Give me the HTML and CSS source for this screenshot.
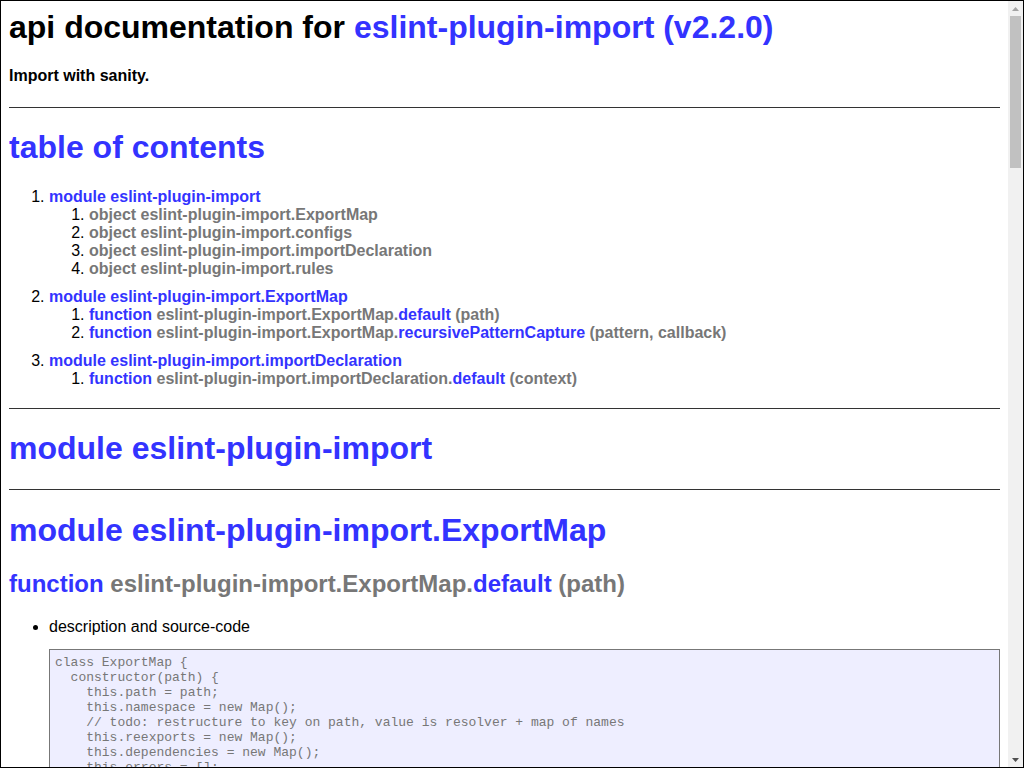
FILE: index.html
```
<!DOCTYPE html>
<html lang="en">
<head>
<meta charset="utf-8">
<title>api documentation for eslint-plugin-import (v2.2.0)</title>
<link rel="stylesheet" href="styles.css">
</head>
<body>
<div class="viewport">
<div class="content">
<div class="page">
<h1 class="title">api documentation for <a href="#">eslint-plugin-import (v2.2.0)</a></h1>
<h4 class="tagline">Import with sanity.</h4>

<div class="section">
<h1 class="section-title"><a href="#">table of contents</a></h1>
<ol class="toc">
  <li class="module-li"><a href="#">module eslint-plugin-import</a>
    <ol>
      <li><span class="sig">object eslint-plugin-import.ExportMap</span></li>
      <li><span class="sig">object eslint-plugin-import.configs</span></li>
      <li><span class="sig">object eslint-plugin-import.importDeclaration</span></li>
      <li><span class="sig">object eslint-plugin-import.rules</span></li>
    </ol>
  </li>
  <li class="module-li"><a href="#">module eslint-plugin-import.ExportMap</a>
    <ol>
      <li><a href="#">function</a> <span class="sig">eslint-plugin-import.ExportMap.</span><a href="#">default</a> <span class="sig">(path)</span></li>
      <li><a href="#">function</a> <span class="sig">eslint-plugin-import.ExportMap.</span><a href="#">recursivePatternCapture</a> <span class="sig">(pattern, callback)</span></li>
    </ol>
  </li>
  <li class="module-li"><a href="#">module eslint-plugin-import.importDeclaration</a>
    <ol>
      <li><a href="#">function</a> <span class="sig">eslint-plugin-import.importDeclaration.</span><a href="#">default</a> <span class="sig">(context)</span></li>
    </ol>
  </li>
</ol>
</div>

<div class="section">
<h1 class="section-title section-title-module"><a href="#">module eslint-plugin-import</a></h1>
</div>

<div class="section">
<h1 class="section-title"><a href="#">module eslint-plugin-import.ExportMap</a></h1>
<h2 class="element-title"><a href="#">function</a> <span class="sig">eslint-plugin-import.ExportMap.</span><a href="#">default</a> <span class="sig">(path)</span></h2>
<ul class="element-list">
<li>description and source-code<pre class="code">class ExportMap {
  constructor(path) {
    this.path = path;
    this.namespace = new Map();
    // todo: restructure to key on path, value is resolver + map of names
    this.reexports = new Map();
    this.dependencies = new Map();
    this.errors = [];
  }

  get hasDefault() {
    return this.get('default') != null;
  } // stronger than this.has

  get size() {
    let size = this.namespace.size + this.reexports.size;
    this.dependencies.forEach(dep =&gt; size += dep().size);
    return size;
  }
...</pre></li>
<li>example usage<pre class="code">n/a</pre></li>
</ul>

<h2 class="element-title"><a href="#">function</a> <span class="sig">eslint-plugin-import.ExportMap.</span><a href="#">recursivePatternCapture</a> <span class="sig">(pattern, callback)</span></h2>
<ul class="element-list">
<li>description and source-code<pre class="code">function recursivePatternCapture(pattern, callback) {
  switch (pattern.type) {
    case 'Identifier':
      // base case
      callback(pattern);
      break;

    case 'ObjectPattern':
      pattern.properties.forEach(({ value }) =&gt; {
        recursivePatternCapture(value, callback);
      });
      break;

    case 'ArrayPattern':
      pattern.elements.forEach(element =&gt; {
        if (element == null) return;
        recursivePatternCapture(element, callback);
      });
      break;
  }
}</pre></li>
<li>example usage<pre class="code">n/a</pre></li>
</ul>
</div>

<div class="section">
<h1 class="section-title"><a href="#">module eslint-plugin-import.importDeclaration</a></h1>
<h2 class="element-title"><a href="#">function</a> <span class="sig">eslint-plugin-import.importDeclaration.</span><a href="#">default</a> <span class="sig">(context)</span></h2>
<ul class="element-list">
<li>description and source-code<pre class="code">function importDeclaration(context) {
  var ancestors = context.getAncestors();
  return ancestors[ancestors.length - 1];
}</pre></li>
<li>example usage<pre class="code">n/a</pre></li>
</ul>
</div>

<div class="footer">[ this document was created with <a href="#">utility2</a> ]</div>
</div>
</div>
<div class="scrollbar" aria-hidden="true">
  <div class="sb-btn"><svg width="7" height="4" viewBox="0 0 7 4"><polygon points="0,4 7,4 3.5,0" fill="#a3a3a3"/></svg></div>
  <div class="sb-track"><div class="sb-thumb"></div></div>
  <div class="sb-btn"><svg width="7" height="4" viewBox="0 0 7 4"><polygon points="0,0 7,0 3.5,4" fill="#505050"/></svg></div>
</div>
</div>
</body>
</html>
```

FILE: styles.css
```
html,
body {
  margin: 0;
  height: 100%;
  overflow: hidden;
}

body {
  font-family: "Liberation Sans", Arial, Helvetica, sans-serif;
  font-size: 16px;
  color: #000;
  background: #fff;
}

.viewport {
  display: flex;
  height: 100%;
  box-sizing: border-box;
  border: 1px solid #000;
}

.content {
  flex: 1;
  min-width: 0;
  overflow: hidden;
}

.page {
  padding: 8px 8px 8px;
}

.scrollbar {
  width: 15px;
  flex: none;
  display: flex;
  flex-direction: column;
  background: #f1f1f1;
}

.sb-btn {
  height: 15px;
  flex: none;
  display: flex;
  align-items: center;
  justify-content: center;
}

.sb-track {
  flex: 1;
  padding: 0 2px;
}

.sb-thumb {
  height: 152px;
  background: #c1c1c1;
}

a {
  color: #33f;
  text-decoration: none;
}

.title {
  font-size: 32px;
  font-weight: bold;
  margin: 0 0 21.44px;
}

.tagline {
  font-size: 16px;
  font-weight: bold;
  margin: 21.28px 0;
}

.section {
  border-top: 1px solid #333;
  margin-top: 20px;
}

.section-title {
  font-size: 32px;
  font-weight: bold;
  margin: 21.44px 0;
}

.section-title-module {
  margin-bottom: 22.2px;
}

.toc {
  margin: 16px 0;
  padding-left: 40px;
}

.toc ol {
  margin: 0;
  padding-left: 40px;
}

.toc li {
  font-weight: bold;
}

.toc li::marker {
  font-weight: normal;
  color: #000;
}

.module-li {
  margin-top: 10px;
}

.sig {
  color: #777;
  font-weight: bold;
}

.element-title {
  font-size: 24px;
  font-weight: bold;
  margin: 19.92px 0;
}

.element-list {
  margin: 16px 0;
  padding-left: 40px;
}

.code {
  font-family: "Liberation Mono", "DejaVu Sans Mono", monospace;
  font-size: 13px;
  line-height: 15px;
  background: #eef;
  border: 1px solid #777;
  color: #777;
  padding: 5px;
  margin: 13px 0;
  white-space: pre-wrap;
  overflow: auto;
}

.footer {
  margin-top: 20px;
  text-align: center;
}
```
